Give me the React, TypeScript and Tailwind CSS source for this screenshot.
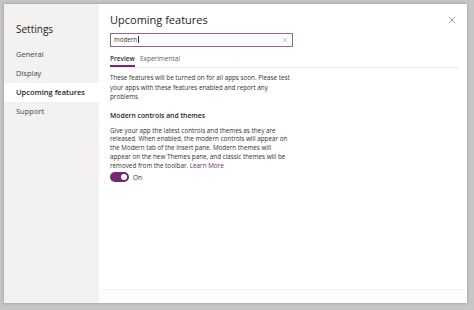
import { X } from "lucide-react";

const font = { fontFamily: "'Open Sans', 'Noto Sans', sans-serif" };

function NavItem({ label, active }: { label: string; active?: boolean }) {
  return (
    <div
      className={
        "flex h-[19px] items-center pl-[12px] text-[7.5px] " +
        (active ? "bg-white font-semibold text-[#252423]" : "text-[#484644]")
      }
    >
      {label}
    </div>
  );
}

export default function App() {
  return (
    <div className="h-[310px] w-[474px] bg-[#c6c6c6] p-[4px] pr-[7px] pb-[7px]" style={font}>
      <div className="flex h-full w-full bg-white shadow-[0_0_3px_rgba(0,0,0,0.25)]">
        <aside className="flex w-[95px] flex-col bg-[#f3f2f1] pt-[17px]">
          <div className="mb-[8px] pl-[12px] text-[10px] leading-[16px] text-[#252423]">Settings</div>
          <NavItem label="General" />
          <NavItem label="Display" />
          <NavItem label="Upcoming features" active />
          <NavItem label="Support" />
        </aside>
        <main className="flex flex-1 flex-col">
          <div className="flex flex-1 flex-col pl-[11px] pr-[8px] pt-[10px]">
            <div className="flex items-start justify-between">
              <h1 className="text-[11px] leading-[12px] text-[#252423]">Upcoming features</h1>
              <X size={12} strokeWidth={1.2} className="mr-[1px] text-[#605e5c]" />
            </div>
            <div className="mt-[7px] flex h-[14px] w-[183px] items-center justify-between border border-[#8b6b8e] pl-[3px] pr-[3px]">
              <span className="text-[6.2px] text-[#323130]">
                modern<span className="ml-[0.5px] inline-block h-[7px] w-px translate-y-[1px] bg-[#323130]" />
              </span>
              <X size={8} strokeWidth={1.4} className="text-[#8a8886]" />
            </div>
            <div className="mt-[7px] flex items-end gap-[5px] border-b border-[#edebe9] pr-[3px]">
              <span className="border-b-2 border-[#742774] pb-[1px] text-[6.5px] font-semibold leading-[10px] text-[#323130]">
                Preview
              </span>
              <span className="pb-[3px] text-[6.5px] leading-[10px] text-[#605e5c]">Experimental</span>
            </div>
            <p className="mt-[5px] whitespace-nowrap text-[6.3px] leading-[9.5px] text-[#323130]">
              These features will be turned on for all apps soon. Please test
              <br />
              your apps with these features enabled and report any
              <br />
              problems
            </p>
            <h2 className="mt-[9px] text-[6.8px] font-semibold leading-[10px] text-[#252423]">Modern controls and themes</h2>
            <p className="mt-[6px] whitespace-nowrap text-[6.3px] leading-[8.8px] text-[#323130]">
              Give your app the latest controls and themes as they are
              <br />
              released. When enabled, the modern controls will appear on
              <br />
              the Modern tab of the Insert pane. Modern themes will
              <br />
              appear on the new Themes pane, and classic themes will be
              <br />
              removed from the toolbar. <span className="text-[#742774]">Learn More</span>
            </p>
            <div className="mt-[2px] flex items-center gap-[4px]">
              <div className="flex h-[10px] w-[19px] items-center justify-end rounded-full bg-[#742774] pr-[2px]">
                <div className="h-[6px] w-[6px] rounded-full bg-white" />
              </div>
              <span className="text-[6.5px] text-[#323130]">On</span>
            </div>
          </div>
          <div className="mx-[2px] mb-[13px] h-px bg-[#f3f2f1]" />
        </main>
      </div>
    </div>
  );
}
